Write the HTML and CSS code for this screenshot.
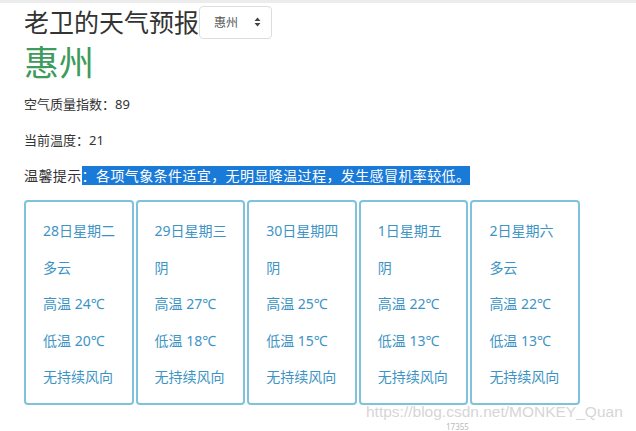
FILE: index.html
```html
<!DOCTYPE html>
<html>
<head>
  <meta charset="utf-8">
  <title>老卫的天气预报</title>
  <link rel="stylesheet" href="styles.css">
</head>
<body>
  <div class="page">
    <div class="header">
      <h1 class="title">老卫的天气预报</h1>
      <div class="city-select">
        <span>惠州</span>
        <svg class="arrows" width="7" height="10" viewBox="0 0 7 10">
          <path d="M3.5 0.5 L6.5 4 L0.5 4 Z" fill="#444"/>
          <path d="M3.5 9.5 L6.5 6 L0.5 6 Z" fill="#444"/>
        </svg>
      </div>
    </div>
    <h2 class="city">惠州</h2>
    <p class="info">空气质量指数：89</p>
    <p class="info">当前温度：21</p>
    <p class="info tip">温馨提示<span class="selected">：各项气象条件适宜，无明显降温过程，发生感冒机率较低。</span></p>

    <div class="forecast">
      <div class="day">
        <p>28日星期二</p>
        <p>多云</p>
        <p>高温 24℃</p>
        <p>低温 20℃</p>
        <p>无持续风向</p>
      </div>
      <div class="day">
        <p>29日星期三</p>
        <p>阴</p>
        <p>高温 27℃</p>
        <p>低温 18℃</p>
        <p>无持续风向</p>
      </div>
      <div class="day">
        <p>30日星期四</p>
        <p>阴</p>
        <p>高温 25℃</p>
        <p>低温 15℃</p>
        <p>无持续风向</p>
      </div>
      <div class="day">
        <p>1日星期五</p>
        <p>阴</p>
        <p>高温 22℃</p>
        <p>低温 13℃</p>
        <p>无持续风向</p>
      </div>
      <div class="day">
        <p>2日星期六</p>
        <p>多云</p>
        <p>高温 22℃</p>
        <p>低温 13℃</p>
        <p>无持续风向</p>
      </div>
    </div>
  </div>
  <div class="watermark">https://blog.csdn.net/MONKEY_Quan</div>
  <div class="counter">17355</div>
</body>
</html>
```

FILE: styles.css
```css
body {
  margin: 0;
  font-family: "Noto Sans", "Noto Sans CJK SC", sans-serif;
  color: #333;
  background: #fff;
  border-top: 3px solid #ececec;
  position: relative;
  height: 428px;
  overflow: hidden;
}

.page {
  padding: 1px 24px 0 24px;
}

.header {
  display: flex;
  align-items: center;
  height: 36px;
}

.title {
  margin: 0;
  font-size: 25px;
  font-weight: normal;
  line-height: 36px;
  color: #333;
}

.city-select {
  width: 73px;
  height: 33px;
  box-sizing: border-box;
  border: 1px solid #ddd;
  border-radius: 4px;
  display: flex;
  align-items: center;
  justify-content: space-between;
  padding: 0 10px 0 14px;
  font-size: 12px;
  color: #555;
}

.city {
  margin: 0;
  font-size: 35px;
  font-weight: normal;
  line-height: 46px;
  color: #3d9b5b;
}

.info {
  margin: 0;
  font-size: 13px;
  line-height: 36px;
  color: #333;
}

.tip {
  font-size: 14px;
  letter-spacing: 0.4px;
}

.selected {
  background: #1a7ad8;
  color: #fff;
}

.forecast {
  display: flex;
  gap: 2px;
  margin-top: 6px;
  width: 556px;
}

.day {
  flex: 1;
  height: 205px;
  box-sizing: border-box;
  border: 2px solid #7fc2dd;
  border-radius: 4px;
  padding: 11px 0 0 17px;
  color: #3d94c4;
  font-size: 14px;
}

.day p {
  margin: 0;
  line-height: 36.5px;
}

.watermark {
  position: absolute;
  left: 366px;
  top: 400px;
  font-family: "Liberation Sans", sans-serif;
  font-size: 15.5px;
  color: #d6d6d6;
}

.counter {
  position: absolute;
  left: 446px;
  top: 419px;
  font-size: 8px;
  line-height: 10px;
  color: #bbb;
}
```
